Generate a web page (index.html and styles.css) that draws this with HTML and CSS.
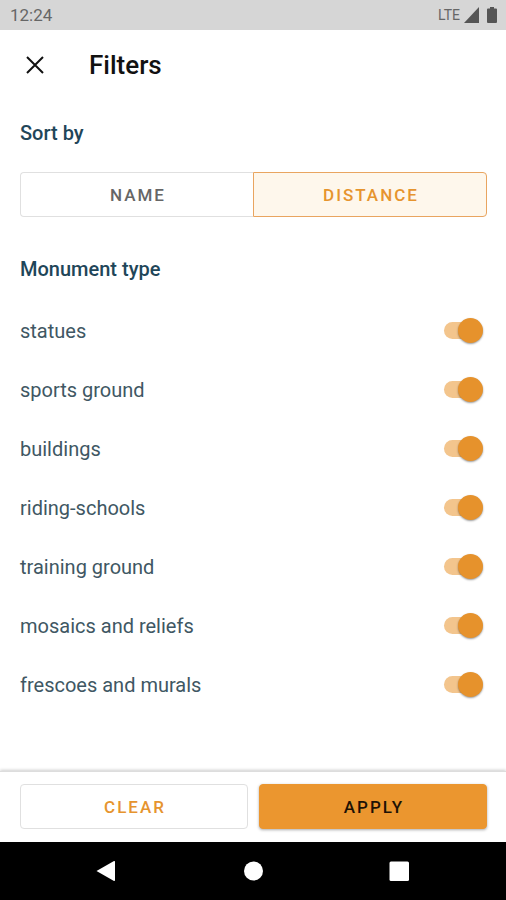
FILE: index.html
```html
<!DOCTYPE html>
<html lang="en">
<head>
<meta charset="utf-8">
<meta name="viewport" content="width=device-width, initial-scale=1">
<title>Filters</title>
<link rel="stylesheet" href="styles.css">
</head>
<body>
<div class="status-bar">
  <span class="clock">12:24</span>
  <span class="network">LTE</span>
  <svg class="signal" viewBox="0 0 15 16" aria-hidden="true"><path d="M15 0V16H0Z"/></svg>
  <svg class="battery" viewBox="0 0 10 16" aria-hidden="true"><path d="M3 0H7V1.5H9Q10 1.5 10 2.5V15Q10 16 9 16H1Q0 16 0 15V2.5Q0 1.5 1 1.5H3Z"/></svg>
</div>
<header class="toolbar">
  <button class="close" type="button" aria-label="Close">
    <svg viewBox="0 0 18 18" aria-hidden="true"><path d="M1 1L17 17M17 1L1 17"/></svg>
  </button>
  <h1>Filters</h1>
</header>
<main class="content">
  <h2 id="sort-heading">Sort by</h2>
  <div class="segments" role="group" aria-labelledby="sort-heading">
    <button class="segment" type="button" aria-pressed="false">NAME</button>
    <button class="segment segment-active" type="button" aria-pressed="true">DISTANCE</button>
  </div>
  <h2>Monument type</h2>
  <div class="options">
    <label class="option"><span>statues</span><input class="switch" type="checkbox" checked></label>
    <label class="option"><span>sports ground</span><input class="switch" type="checkbox" checked></label>
    <label class="option"><span>buildings</span><input class="switch" type="checkbox" checked></label>
    <label class="option"><span>riding-schools</span><input class="switch" type="checkbox" checked></label>
    <label class="option"><span>training ground</span><input class="switch" type="checkbox" checked></label>
    <label class="option"><span>mosaics and reliefs</span><input class="switch" type="checkbox" checked></label>
    <label class="option"><span>frescoes and murals</span><input class="switch" type="checkbox" checked></label>
  </div>
</main>
<footer class="actions">
  <button class="action" type="button">CLEAR</button>
  <button class="action action-primary" type="button">APPLY</button>
</footer>
<nav class="system-nav" aria-label="System">
  <button type="button" aria-label="Back"><svg viewBox="0 0 22 22"><path d="M0.5 11L18 1Q19 0.6 19 2V20Q19 21.4 18 21Z"/></svg></button>
  <button type="button" aria-label="Home"><svg viewBox="0 0 22 22"><circle cx="11.5" cy="11" r="9.5"/></svg></button>
  <button type="button" aria-label="Recent apps"><svg viewBox="0 0 22 22"><rect x="1.5" y="1.5" width="19.5" height="19.5" rx="1.5"/></svg></button>
</nav>
</body>
</html>
```

FILE: styles.css
```css
* {
  box-sizing: border-box;
}

body {
  margin: 0;
  min-height: 100vh;
  display: flex;
  flex-direction: column;
  background: #fff;
  color: #1f4659;
  font-family: Roboto, "Liberation Sans", sans-serif;
}

button {
  margin: 0;
  padding: 0;
  border: 0;
  background: none;
  font-family: inherit;
  cursor: pointer;
}

.status-bar {
  display: flex;
  align-items: center;
  height: 30px;
  padding: 0 9px 0 10px;
  background: #d6d6d6;
  color: #666;
}

.clock {
  flex: 1;
  font-size: 17px;
}

.network {
  margin-right: 4px;
  font-size: 14px;
}

.status-bar svg {
  height: 16px;
  fill: #555;
}

.signal {
  width: 15px;
  margin-right: 8px;
}

.battery {
  width: 10px;
}

.toolbar {
  display: flex;
  align-items: center;
  gap: 35px;
  height: 70px;
  padding: 0 16px;
}

.close {
  display: grid;
  place-items: center;
  width: 38px;
  height: 38px;
}

.close svg {
  width: 18px;
  height: 18px;
  fill: none;
  stroke: #111;
  stroke-width: 2;
}

h1,
h2 {
  margin: 0;
}

h1 {
  color: #111;
  font-size: 26px;
  font-weight: 500;
  line-height: 32px;
}

h2 {
  font-size: 20px;
  font-weight: 500;
  line-height: 24px;
}

.content {
  flex: 1;
  padding: 21px 19px 20px 20px;
}

.segments {
  display: flex;
  margin: 27px 0 40px;
}

.segment,
.action {
  flex: 1;
  height: 45px;
  padding-left: 2px;
  border: 1px solid #e0e0e0;
  border-radius: 4px;
  font-size: 17px;
  font-weight: 500;
  letter-spacing: 2px;
}

.segment {
  border-right: 0;
  border-radius: 4px 0 0 4px;
  color: #666;
}

.segment-active {
  border: 1px solid #e9a560;
  border-radius: 0 4px 4px 0;
  background: #fef7ec;
  color: #e6942e;
}

.options {
  margin-top: 20px;
}

.option {
  display: flex;
  align-items: center;
  justify-content: space-between;
  height: 59px;
  padding-right: 4px;
  font-size: 20px;
  color: #405763;
}

.switch {
  appearance: none;
  display: flex;
  align-items: center;
  width: 39px;
  height: 25px;
  margin: 0;
  cursor: pointer;
}

.switch::before {
  content: "";
  width: 34px;
  height: 17px;
  margin-right: -20px;
  border-radius: 9px;
  background: #d0d0d0;
}

.switch::after {
  content: "";
  flex: none;
  width: 25px;
  height: 25px;
  border-radius: 50%;
  background: #fff;
  box-shadow: 0 1px 2px #0006;
}

.switch:checked::before {
  background: #f3c58d;
}

.switch:checked::after {
  background: #e6922c;
}

.actions {
  display: flex;
  gap: 11px;
  padding: 12px 19px 13px 20px;
  border-top: 1px solid #ddd;
  background: #fff;
  box-shadow: 0 -1px 3px #0003;
}

.action {
  color: #e6942e;
}

.action-primary {
  border-color: #eb962f;
  background: #eb962f;
  color: #1d1205;
  box-shadow: 0 1px 3px #0005;
}

.system-nav {
  display: flex;
  justify-content: center;
  gap: 124px;
  height: 58px;
  background: #000;
}

.system-nav svg {
  display: block;
  width: 22px;
  height: 22px;
  fill: #fff;
}
```
